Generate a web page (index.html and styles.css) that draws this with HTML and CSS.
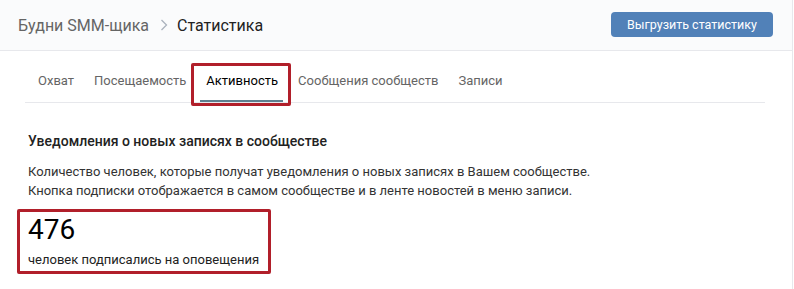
FILE: index.html
```html
<!DOCTYPE html>
<html lang="ru">
<head>
<meta charset="utf-8">
<link rel="stylesheet" href="styles.css">
</head>
<body>
<div class="page">
  <header class="header">
    <div class="crumbs">
      <span class="crumb">Будни SMM-щика</span>
      <svg class="chev" width="8" height="12" viewBox="0 0 8 12"><path d="M1.5 1l5 5-5 5" fill="none" stroke="#aab2bd" stroke-width="1.3"/></svg>
      <span class="crumb-current">Статистика</span>
    </div>
    <button class="btn">Выгрузить статистику</button>
  </header>
  <main class="content">
    <nav class="tabs">
      <span class="tab">Охват</span>
      <span class="tab">Посещаемость</span>
      <span class="tab tab-active">Активность</span>
      <span class="tab">Сообщения сообществ</span>
      <span class="tab">Записи</span>
    </nav>
    <section class="block">
      <h2 class="title">Уведомления о новых записях в сообществе</h2>
      <p class="desc">Количество человек, которые получат уведомления о новых записях в Вашем сообществе.<br>Кнопка подписки отображается в самом сообществе и в ленте новостей в меню записи.</p>
      <div class="stat">
        <div class="num">476</div>
        <div class="label">человек подписались на оповещения</div>
      </div>
    </section>
  </main>
</div>
</body>
</html>
```

FILE: styles.css
```css
* { box-sizing: border-box; }
html, body { margin: 0; padding: 0; background: #fff; }
body { font-family: Roboto, "Open Sans", Arial, sans-serif; color: #222; }
.page { width: 793px; height: 289px; border-right: 1px solid #e7e8ec; overflow: hidden; }
.header {
  height: 51px;
  background: #fafbfc;
  border-bottom: 1px solid #e7e8ec;
  display: flex;
  align-items: center;
  justify-content: space-between;
  padding: 0 19px 0 18px;
}
.crumbs { display: flex; align-items: center; font-size: 16px; }
.crumb { color: #656565; }
.chev { margin: 0 9px 0 11px; }
.crumb-current { color: #222; }
.btn {
  font-family: Roboto, Arial, sans-serif;
  font-size: 12.5px;
  color: #fff;
  background: #5181b8;
  border: none;
  border-radius: 4px;
  height: 25px;
  width: 162px;
  padding: 0;
  margin-top: -1px;
}
.content { padding: 0 28px 0 25px; }
.tabs {
  display: flex;
  height: 52px;
  align-items: stretch;
  border-bottom: 1px solid #e7e8ec;
  width: 740px;
}
.tab {
  display: flex;
  align-items: center;
  padding: 8px 10px 0 13px;
  font-size: 13px;
  color: #656565;
  position: relative;
  margin-right: -3px;
}
.tab-active { color: #000; }
.tab-active::after {
  content: "";
  position: absolute;
  left: 7px; right: 5px; bottom: 0;
  height: 2px;
  background: #5e7f8f;
}
.tab-active::before {
  content: "";
  position: absolute;
  left: -2px; right: -3px; top: 12px; bottom: -4px;
  border: 3px solid #b11f2a;
  border-radius: 2px;
}
.block { padding: 30px 0 0 3px; }
.title { margin: 0; font-size: 14px; font-weight: 500; color: #222; }
.desc { margin: 13px 0 0; font-size: 13px; line-height: 19px; color: #333; }
.stat {
  display: inline-block;
  margin: 9px 0 0 -11px;
  border: 3px solid #b11f2a;
  border-radius: 2px;
  padding: 1px 8px 4px 8px;
  width: 254px;
}
.num { font-size: 28px; line-height: 34px; color: #000; }
.label { font-size: 13px; color: #222; margin-top: 5px; }
```
